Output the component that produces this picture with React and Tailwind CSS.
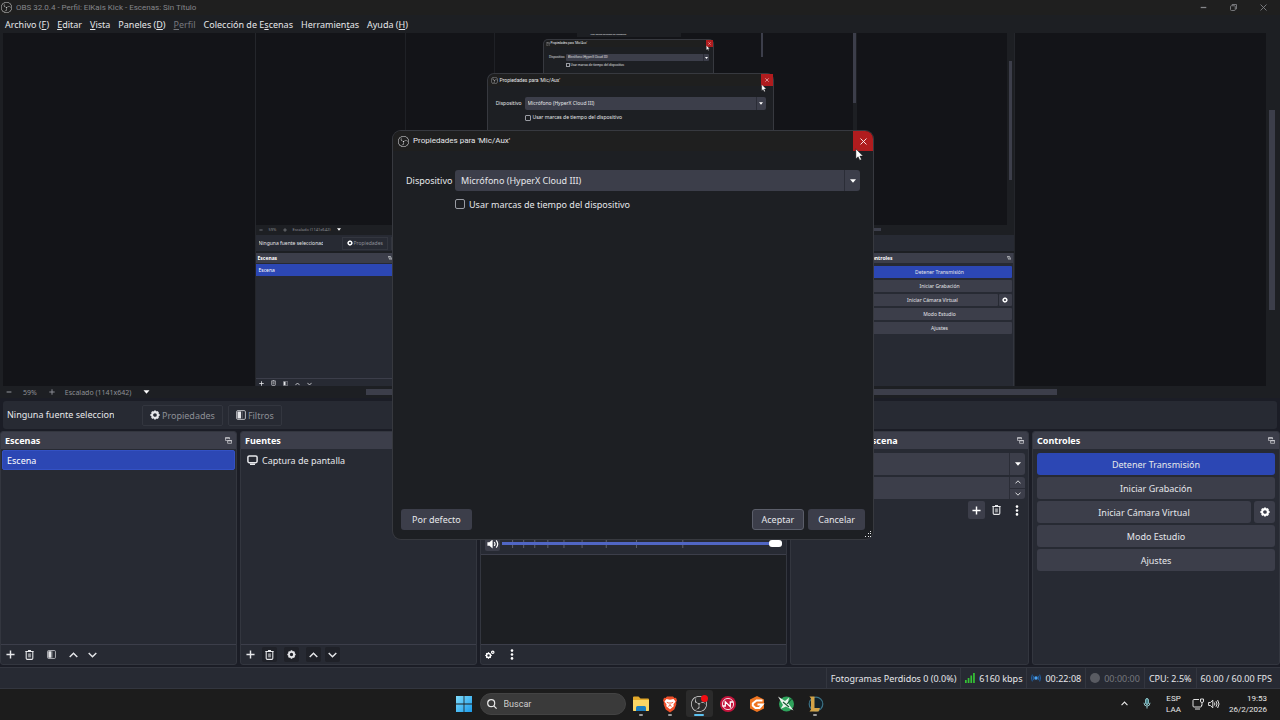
import React from "react";
import clsx from "clsx";
import { SiObsstudio } from "react-icons/si";

/* ---------- icons ---------- */

const Plus = ({ className = "size-[9px]" }) => (
  <svg viewBox="0 0 10 10" className={className} stroke="currentColor" strokeWidth="1.6" aria-hidden="true">
    <path d="M5 .5v9M.5 5h9" />
  </svg>
);

const Minus = ({ className = "size-[7px]" }) => (
  <svg viewBox="0 0 10 10" className={className} stroke="currentColor" strokeWidth="1.8" aria-hidden="true">
    <path d="M1 5h8" />
  </svg>
);

const Trash = ({ className = "h-[10px] w-[9px]" }) => (
  <svg viewBox="0 0 9 10" className={className} fill="none" stroke="currentColor" aria-hidden="true">
    <path d="M.3 1.5h8.4M3 .6h3" strokeWidth="1.1" />
    <path d="M1.2 2v6.2q0 1.2 1.1 1.2h4.4q1.1 0 1.1-1.2V2" strokeWidth="1.1" />
    <path d="M3.4 3.4v4M4.5 3.4v4M5.6 3.4v4" strokeWidth=".8" opacity=".75" />
  </svg>
);

const Gear = ({ className = "size-[10px]" }) => (
  <svg viewBox="0 0 20 20" className={className} fill="none" stroke="currentColor" aria-hidden="true">
    <circle cx="10" cy="10" r="5.8" strokeWidth="4.2" />
    <path d="M10 .8v3M10 16.2v3M.8 10h3M16.2 10h3M3.5 3.5l2 2M14.5 14.5l2 2M16.5 3.5l-2 2M5.5 14.5l-2 2" strokeWidth="3.6" />
  </svg>
);

const Gears = () => (
  <svg viewBox="0 0 20 18" className="h-[9px] w-[10px]" fill="none" stroke="currentColor" aria-hidden="true">
    <circle cx="7" cy="11" r="4" strokeWidth="3" />
    <path d="M7 4.5v2M7 15.5v2M.5 11h2M11.5 11h2M2.5 6.5l1.5 1.5M11.5 15.5l-1.500-1.500M2.500 15.500l1.500-1.500" strokeWidth="2.4" />
    <circle cx="15.5" cy="4.5" r="2.4" strokeWidth="2.4" />
  </svg>
);

const Filter = ({ className = "size-[9px]" }) => (
  <svg viewBox="0 0 10 10" className={className} aria-hidden="true">
    <rect x=".6" y=".6" width="8.8" height="8.8" rx="1.2" fill="none" stroke="currentColor" strokeWidth="1" opacity=".75" />
    <path d="M1.5 1.5h3.500v7H1.500z" fill="currentColor" />
    <path d="M6.2 1.5v7" stroke="currentColor" strokeWidth=".8" opacity=".4" />
  </svg>
);

const Chevron = ({ down, className = "h-[6px] w-[9px]" }) => (
  <svg viewBox="0 0 9 6" className={className} fill="none" stroke="currentColor" strokeWidth="1.4" aria-hidden="true">
    <path d={down ? "M.7 .9l3.8 3.9 3.8-3.9" : "M.7 5.1l3.8-3.9 3.8 3.9"} />
  </svg>
);

const Caret = ({ className = "h-[4px] w-[6px]" }) => (
  <svg viewBox="0 0 6 4" className={className} fill="currentColor" aria-hidden="true">
    <path d="M0 .2h6L3 3.8z" />
  </svg>
);

const Dots = () => (
  <svg viewBox="0 0 4 11" className="h-[11px] w-[4px]" fill="currentColor" aria-hidden="true">
    <circle cx="2" cy="1.6" r="1.3" />
    <circle cx="2" cy="5.5" r="1.3" />
    <circle cx="2" cy="9.4" r="1.3" />
  </svg>
);

const PopOut = ({ className = "size-[7px]" }) => (
  <svg viewBox="0 0 8 8" className={className} fill="none" stroke="currentColor" aria-hidden="true">
    <path d="M2.6 3.9H.5V.9h4.700v1.700" strokeWidth=".8" />
    <path d="M.3 1.2h5" strokeWidth="1.2" />
    <path d="M3 4h4.500v3.200H3z" strokeWidth=".8" />
    <path d="M2.7 4.2h5" strokeWidth="1.2" />
  </svg>
);

const Monitor = () => (
  <svg viewBox="0 0 11 10" className="h-[10px] w-[11px]" fill="none" stroke="currentColor" aria-hidden="true">
    <rect x=".9" y=".9" width="9.2" height="6.8" rx="1.4" strokeWidth="1.5" />
    <path d="M3 9.2h5" strokeWidth="1.4" />
  </svg>
);

const Cross = ({ className = "size-[7px]" }) => (
  <svg viewBox="0 0 8 8" className={className} stroke="currentColor" strokeWidth="1" aria-hidden="true">
    <path d="M.6 .6l6.8 6.8M7.4 .6L.6 7.4" />
  </svg>
);

const Speaker = () => (
  <svg viewBox="0 0 12 10" className="h-[10px] w-[12px]" fill="none" stroke="currentColor" aria-hidden="true">
    <path d="M.4 3.2h2L5.6.5v9L2.4 6.8h-2z" fill="currentColor" stroke="none" />
    <path d="M7.2 3q1.600 2 0 4M9.2 1.300q3 3.700 0 7.400" strokeWidth="1.2" />
  </svg>
);

const Cursor = ({ className }) => (
  <svg viewBox="0 0 10 14" className={className} aria-hidden="true">
    <path d="M1 .8v11l2.500-2.300 1.800 3.900 1.900-.9-1.800-3.700h3.500z" fill="#fff" stroke="#111" strokeWidth=".5" />
  </svg>
);

/* ---------- dialog ---------- */

const dialogSizes = {
  lg: {
    box: "w-[480px] h-[408px] rounded-lg",
    bar: "h-[20px] pl-[5px] gap-[4px] text-[8px]",
    logo: "size-[11px]",
    close: "w-[20px] h-[20px] rounded-tr-lg",
    cross: "size-[7px]",
    form: "pt-[19px] pl-[13px] pr-[13px] text-[9px]",
    grid: "grid-cols-[44px_1fr] gap-x-[5px] gap-y-[7px]",
    select: "h-[21px] pl-[6px] rounded-[3px]",
    arrow: "w-[16px]",
    caret: "h-[4px] w-[6px]",
    check: "size-[10px] rounded-[2px]",
    checkRow: "gap-[4px] h-[12px]",
  },
  md: {
    box: "w-[285px] h-[242px] rounded-md",
    bar: "h-[12px] pl-[3px] gap-[2px] text-[5px]",
    logo: "size-[7px]",
    close: "w-[12px] h-[12px]",
    cross: "size-[4px]",
    form: "pt-[11px] pl-[8px] pr-[7px] text-[5px]",
    grid: "grid-cols-[26px_1fr] gap-x-[3px] gap-y-[4px]",
    select: "h-[13px] pl-[3px] rounded-[2px]",
    arrow: "w-[10px]",
    caret: "h-[3px] w-[4px]",
    check: "size-[6px] rounded-[1px]",
    checkRow: "gap-[2px] h-[7px]",
  },
  sm: {
    box: "w-[169px] h-[144px] rounded",
    bar: "h-[7px] pl-[2px] gap-[1px] text-[3px]",
    logo: "size-[4px]",
    close: "w-[7px] h-[7px]",
    cross: "size-[3px]",
    form: "pt-[7px] pl-[5px] pr-[4px] text-[3px]",
    grid: "grid-cols-[16px_1fr] gap-x-[1px] gap-y-[2px]",
    select: "h-[7px] pl-[2px] rounded-[1px]",
    arrow: "w-[6px]",
    caret: "h-[2px] w-[3px]",
    check: "size-[4px]",
    checkRow: "gap-[1px] h-[4px]",
  },
};

function PropertiesDialog({ size, id, className, children }) {
  const s = dialogSizes[size];
  return (
    <section
      role="dialog"
      aria-label="Propiedades para 'Mic/Aux'"
      className={clsx("absolute flex flex-col bg-[#1d1f23] ring-1 ring-[#37393f] text-[#e6e7ea]", s.box, className)}
    >
      <header className={clsx("flex items-center leading-none rounded-t-lg bg-[#1f1f1f] font-[Roboto,'Noto_Sans',sans-serif]", s.bar)}>
        <SiObsstudio className={s.logo} />
        <h2 className="flex-1 whitespace-nowrap">Propiedades para 'Mic/Aux'</h2>
        <button aria-label="Cerrar" className={clsx("flex items-center justify-center bg-[#b01c1e] text-white", s.close)}>
          <Cross className={s.cross} />
        </button>
      </header>
      <div className={clsx("flex-1 leading-none", s.form)}>
        <div className={clsx("grid items-center", s.grid)}>
          <label htmlFor={id + "-device"} className="text-right whitespace-nowrap">Dispositivo</label>
          <div className="relative flex">
            <select id={id + "-device"} className={clsx("w-full appearance-none bg-[#3c3e4a] leading-normal outline-none", s.select)}>
              <option>Micrófono (HyperX Cloud III)</option>
            </select>
            <span className={clsx("pointer-events-none absolute inset-y-0 right-0 flex items-center justify-center border-l border-[#2b2d37] text-white", s.arrow)}>
              <Caret className={s.caret} />
            </span>
          </div>
          <label className={clsx("col-start-2 flex items-center whitespace-nowrap", s.checkRow)}>
            <input type="checkbox" className={clsx("shrink-0 appearance-none border border-[#9a9ca3]", s.check)} />
            Usar marcas de tiempo del dispositivo
          </label>
        </div>
      </div>
      {children}
    </section>
  );
}

/* ---------- shared dock pieces ---------- */

function Dock({ title, mini, children, className }) {
  return (
    <section className={clsx("flex min-w-0 flex-col overflow-hidden bg-[#272a33]", mini ? "border-r border-[#33363f]" : "rounded-[3px] border border-[#33363f]", className)}>
      <header
        className={clsx(
          "flex shrink-0 items-center justify-between bg-[#3c3e4a] font-bold leading-none text-white",
          mini ? "h-[10px] px-[2px] text-[5px]" : "h-[17px] px-[4px] text-[9px]"
        )}
      >
        <h3>{title}</h3>
        <button aria-label={"Desacoplar " + title} className="text-[#d5d6da]">
          <PopOut className={mini ? "size-[4px]" : "size-[7px]"} />
        </button>
      </header>
      {children}
    </section>
  );
}

function Controls({ mini }) {
  const btn = clsx(
    "flex items-center justify-center bg-[#3c3e4a] leading-none",
    mini ? "h-[12px] rounded-[1px]" : "h-[22px] rounded-[3px]"
  );
  return (
    <div className={clsx("flex flex-col text-[#e6e7ea]", mini ? "gap-[2px] px-[1px] pt-[3px] text-[5px]" : "gap-[2px] px-[4px] pt-[4px] text-[9px]")}>
      <button className={clsx(btn, "bg-[#2c47b4]!")}>Detener Transmisión</button>
      <button className={btn}>Iniciar Grabación</button>
      <div className={clsx("flex", mini ? "gap-[1px]" : "gap-[3px]")}>
        <button className={clsx(btn, "flex-1")}>Iniciar Cámara Virtual</button>
        <button aria-label="Configurar cámara virtual" className={clsx(btn, "text-white", mini ? "w-[13px]" : "w-[21px]")}>
          <Gear className={mini ? "size-[6px]" : "size-[10px]"} />
        </button>
      </div>
      <button className={btn}>Modo Estudio</button>
      <button className={btn}>Ajustes</button>
    </div>
  );
}

/* ---------- preview: the captured desktop, seen inside itself ---------- */

function CapturedDesktop() {
  return (
    <div className="relative flex h-full w-[760px] shrink-0 flex-col overflow-hidden border-x border-[#24262b] bg-[#1d1f23]">
      <div className="relative flex h-[192px] shrink-0 bg-[#131418]">
        <div className="flex flex-1 justify-center overflow-hidden">
          <div className="flex w-[452px] border-l border-[#1f2126] pl-[88px]">
            <div className="flex w-[269px] justify-end border-l border-[#1f2126]">
              <div className="h-[24px] w-[2px] bg-[#3c3e4a]" />
            </div>
            <div className="flex flex-1 justify-end">
              <div className="w-[4px] bg-[#1d1f23]">
                <div className="h-[70px] w-[3px] bg-[#3c3e4a]" />
              </div>
            </div>
          </div>
        </div>
        <div className="w-[7px] bg-[#1d1f23] px-[2px] pt-[28px]">
          <div className="h-[119px] bg-[#3c3e4a]" />
        </div>
        <div className="absolute top-0 left-[321px] w-[104px] bg-[#1d1f23] pl-[14px] text-[2px] leading-[4px] whitespace-nowrap text-[#e6e7ea]">
          Usar marcas de tiempo del dispositivo
        </div>
        <PropertiesDialog size="sm" id="echo-two" className="top-[7px] left-[288px]">
          <Cursor className="absolute top-[5px] right-[3px] h-[6px] w-[4px]" />
        </PropertiesDialog>
        <PropertiesDialog size="md" id="echo-one" className="top-[41px] left-[232px]">
          <Cursor className="absolute top-[10px] right-[6px] h-[8px] w-[6px]" />
        </PropertiesDialog>
      </div>
      <div className="flex h-[9px] shrink-0 items-center text-[4px] leading-none text-[#8d8f96]">
        <Minus className="ml-[3px] size-[4px]" />
        <span className="ml-[6px]">59%</span>
        <Plus className="ml-[7px] size-[4px]" />
        <span className="ml-[5px]">Escalado (1141x642)</span>
        <Caret className="ml-[7px] h-[3px] w-[4px] text-white" />
        <div className="ml-[120px] h-[3px] w-[420px] bg-[#3c3e4a]" />
      </div>
      <div className="mt-[1px] flex h-[16px] shrink-0 items-center bg-[#272a33] text-[5px] leading-none text-[#e6e7ea]">
        <span className="ml-[3px] w-[64px] overflow-hidden leading-[8px] whitespace-nowrap">Ninguna fuente seleccionada</span>
        <button className="ml-[19px] flex h-[13px] items-center gap-px border border-[#33363f] px-[4px] text-[#8d8f96]">
          <Gear className="size-[6px] text-white" />
          Propiedades
        </button>
        <button className="ml-[3px] h-[13px] border border-[#33363f] px-[4px] text-[#8d8f96]">Filtros</button>
      </div>
      <div className="mt-[2px] flex flex-1 gap-[2px]">
        <Dock mini title="Escenas" className="w-[139px]">
          <div className="mt-px flex h-[12px] items-center bg-[#2c47b4] pl-[3px] text-[5px] leading-none text-white">Escena</div>
          <div className="flex-1" />
          <div className="flex h-[8px] items-end gap-[7px] border-t border-[#3c3e4a] pl-[3px] text-[#e6e7ea]">
            <Plus className="size-[5px]" />
            <Trash className="h-[6px] w-[5px]" />
            <Filter className="size-[5px]" />
            <Chevron className="h-[4px] w-[5px]" />
            <Chevron down className="h-[4px] w-[5px]" />
          </div>
        </Dock>
        <div className="flex-1 bg-[#272a33]" />
        <Dock mini title="Controles" className="w-[147px]">
          <Controls mini />
        </Dock>
      </div>
    </div>
  );
}

/* ---------- main window ---------- */

const menu = [
  ["Archivo (", "F", ")"],
  ["", "E", "ditar"],
  ["", "V", "ista"],
  ["Paneles (", "D", ")"],
  ["", "P", "erfil", true],
  ["Colección de E", "s", "cenas"],
  ["Herramien", "t", "as"],
  ["Ayuda (", "H", ")"],
];

function TitleBar() {
  return (
    <header className="flex h-[15px] items-center bg-[#1f1f1f] pl-[1px] text-[#85868a]">
      <SiObsstudio className="size-[11px] text-[#d0d0d0]" />
      <h1 className="ml-[4px] flex-1 font-[Roboto,'Noto_Sans',sans-serif] text-[8px] leading-none">
        OBS 32.0.4 - Perfil: ElKais Kick - Escenas: Sin Título
      </h1>
      <div className="flex items-center gap-[23px] pr-[13px]">
        <button aria-label="Minimizar"><Minus /></button>
        <button aria-label="Restaurar">
          <svg viewBox="0 0 8 8" className="size-[7px]" fill="none" stroke="currentColor" aria-hidden="true">
            <rect x=".6" y="2" width="5.4" height="5.4" rx="1" />
            <path d="M2.4 1.8V.6h5v5H6.2" />
          </svg>
        </button>
        <button aria-label="Cerrar"><Cross /></button>
      </div>
    </header>
  );
}

function MenuBar() {
  return (
    <nav className="flex h-[18px] items-center gap-[8px] bg-[#1d1f23] px-[5px] text-[9px] leading-none text-[#e6e7ea]">
      {menu.map(([a, k, b, off]) => (
        <button key={a + k + b} className={clsx(off && "text-[#75777d]")}>
          {a}<u>{k}</u>{b}
        </button>
      ))}
    </nav>
  );
}

function ToolButton({ label, dim, apart, children }) {
  return (
    <button
      aria-label={label}
      className={clsx("flex h-[15px] w-[15px] items-center justify-center rounded-[2px]", dim && "bg-[#1f2128]", apart && "ml-[3px]")}
    >
      {children}
    </button>
  );
}

const ticks = [12, 23, 34, 47, 63, 81, 105, 135, 181];

function Mixer() {
  return (
    <Dock title="Mezclador de audio">
      <div className="flex h-[106px] shrink-0 items-end border-b border-[#3c3e4a] px-[4px] pb-[3px]">
        <button aria-label="Silenciar" className="flex h-[15px] w-[15px] items-center justify-center rounded-[2px] bg-[#3c3e4a] text-white">
          <Speaker />
        </button>
        <div className="relative flex h-[15px] flex-1 items-center">
          <svg viewBox="0 0 280 8" preserveAspectRatio="none" className="absolute inset-x-0 top-[4px] h-[8px] w-full" stroke="#5d606e" aria-hidden="true">
            {ticks.map((x) => <path key={x} d={`M${x}.5 0v8`} />)}
          </svg>
          <input
            type="range"
            aria-label="Volumen"
            defaultValue="100"
            className="relative ml-[2px] h-[3px] w-full appearance-none bg-[#5066c4] [&::-webkit-slider-thumb]:h-[7px] [&::-webkit-slider-thumb]:w-[13px] [&::-webkit-slider-thumb]:appearance-none [&::-webkit-slider-thumb]:rounded-[3px] [&::-webkit-slider-thumb]:bg-white"
          />
        </div>
      </div>
      <div className="flex-1 bg-[#1d1f23]" />
      <footer className="flex h-[20px] items-center gap-[7px] border-t border-[#3c3e4a] px-px text-white">
        <ToolButton label="Ajustes de audio"><Gears /></ToolButton>
        <ToolButton label="Menú del mezclador"><Dots /></ToolButton>
      </footer>
    </Dock>
  );
}

function Docks() {
  return (
    <main className="grid h-[234px] grid-cols-[237fr_237fr_307fr_239fr_248fr] gap-[3px] text-[9px] leading-none text-[#e6e7ea]">
      <Dock title="Escenas">
        <ul className="flex-1 px-px pt-px">
          <li className="flex h-[20px] items-center rounded-[2px] border border-[#3351c4] bg-[#2c47b4] pl-[4px] text-white">Escena</li>
        </ul>
        <footer className="flex h-[20px] items-center gap-[4px] border-t border-[#3c3e4a] px-[2px]">
          <ToolButton label="Agregar escena"><Plus /></ToolButton>
          <ToolButton label="Eliminar escena"><Trash /></ToolButton>
          <ToolButton apart label="Filtros de escena"><Filter /></ToolButton>
          <ToolButton apart label="Subir escena"><Chevron /></ToolButton>
          <ToolButton label="Bajar escena"><Chevron down /></ToolButton>
        </footer>
      </Dock>
      <Dock title="Fuentes">
        <ul className="flex-1 px-[6px] pt-px">
          <li className="flex h-[20px] items-center gap-[4px]"><Monitor />Captura de pantalla</li>
        </ul>
        <footer className="flex h-[20px] items-center gap-[4px] border-t border-[#3c3e4a] px-[2px]">
          <ToolButton label="Agregar fuente"><Plus /></ToolButton>
          <ToolButton dim label="Eliminar fuente"><Trash /></ToolButton>
          <ToolButton dim apart label="Propiedades de fuente"><Gear className="size-[9px]" /></ToolButton>
          <ToolButton dim apart label="Subir fuente"><Chevron /></ToolButton>
          <ToolButton dim label="Bajar fuente"><Chevron down /></ToolButton>
        </footer>
      </Dock>
      <Mixer />
      <Dock title="Transiciones de escena">
        <div className="flex flex-col gap-[2px] px-[3px] pt-[4px]">
          <div className="relative flex">
            <select aria-label="Transición" className="h-[22px] w-full appearance-none rounded-[3px] bg-[#3c3e4a] pl-[6px]">
              <option>Corte</option>
            </select>
            <span className="pointer-events-none absolute inset-y-0 right-0 flex w-[16px] items-center justify-center border-l border-[#2b2d37] text-white"><Caret /></span>
          </div>
          <div className="flex h-[22px] rounded-[3px] bg-[#3c3e4a]">
            <input aria-label="Duración" defaultValue="300 ms" className="min-w-0 flex-1 bg-transparent pl-[6px]" />
            <div className="flex w-[16px] flex-col border-l border-[#2b2d37]">
              <button aria-label="Aumentar duración" className="flex flex-1 items-center justify-center border-b border-[#2b2d37]"><Chevron className="h-[4px] w-[6px]" /></button>
              <button aria-label="Reducir duración" className="flex flex-1 items-center justify-center"><Chevron down className="h-[4px] w-[6px]" /></button>
            </div>
          </div>
          <div className="flex items-center justify-end gap-[3px]">
            <button aria-label="Agregar transición" className="flex h-[18px] w-[17px] items-center justify-center rounded-[2px] bg-[#3c3e4a] text-white"><Plus /></button>
            <button aria-label="Eliminar transición" className="flex h-[18px] w-[17px] items-center justify-center"><Trash /></button>
            <button aria-label="Más opciones" className="flex h-[18px] w-[17px] items-center justify-center text-white"><Dots /></button>
          </div>
        </div>
      </Dock>
      <Dock title="Controles">
        <Controls />
      </Dock>
    </main>
  );
}

function StatusBar() {
  const cell = "flex h-full items-center border-l border-[#33363f] px-[4px]";
  return (
    <footer className="mt-[2px] flex h-[22px] items-center justify-end border-y border-[#33363f] bg-[#272a33] pr-[4px] text-[9px] leading-none text-[#e6e7ea]">
      <span className={cell}>Fotogramas Perdidos 0 (0.0%)</span>
      <span className={clsx(cell, "gap-[4px]")}>
        <svg viewBox="0 0 10 10" className="size-[10px]" fill="#35c435" aria-hidden="true">
          <path d="M0 7h1.700v3H0zM2.700 5h1.700v5H2.700zM5.400 2.500h1.700V10H5.400zM8.100 0h1.700v10H8.100z" />
        </svg>
        6160 kbps
      </span>
      <span className={clsx(cell, "gap-[4px]")}>
        <svg viewBox="0 0 10 8" className="h-[8px] w-[10px]" fill="none" stroke="#2066ae" aria-hidden="true">
          <circle cx="5" cy="4" r="1.700" fill="#4aa3f5" stroke="none" />
          <path d="M2.900 1.800q-1.500 2.200 0 4.400M7.100 1.800q1.500 2.200 0 4.400M1.300.6q-1.500 3.400 0 6.800M8.700.6q1.500 3.400 0 6.800" />
        </svg>
        00:22:08
      </span>
      <span className={clsx(cell, "gap-[4px] text-[#75777d]")}>
        <span className="size-[10px] rounded-full bg-[#595b62]" />
        00:00:00
      </span>
      <span className={cell}>CPU: 2.5%</span>
      <span className={cell}>60.00 / 60.00 FPS</span>
    </footer>
  );
}

/* ---------- windows taskbar ---------- */

function TaskApp({ label, running, active, children }) {
  return (
    <button aria-label={label} className={clsx("flex h-[27px] w-[27px] flex-col items-center justify-center rounded-[3px] pt-[4px]", active && "bg-[#2b2b2b]")}>
      <svg viewBox="0 0 18 18" className="size-[18px]" aria-hidden="true">{children}</svg>
      <span className={clsx("mt-px h-[2px] rounded-full", active ? "w-[10px] bg-[#5cc0ee]" : "w-[4px]", running && "bg-[#9b9b9b]")} />
    </button>
  );
}

function Taskbar() {
  return (
    <footer className="grid h-[31px] grid-cols-[1fr_auto_1fr] items-center bg-[#1c1c1c] pb-[2px] font-[Roboto,'Noto_Sans',sans-serif] text-[#e8e8e8]">
      <div />
      <div className="flex items-center gap-[2px] pl-[4px]">
        <button aria-label="Inicio" className="mr-[6px]">
          <svg viewBox="0 0 16 16" className="size-[16px]" aria-hidden="true">
            <defs>
              <linearGradient id="win" x1="0" y1="0" x2="1" y2="1">
                <stop offset="0" stopColor="#7fdcfb" />
                <stop offset="1" stopColor="#1b9bea" />
              </linearGradient>
            </defs>
            <path d="M0 0h7.600v7.600H0zM8.400 0H16v7.600H8.400zM0 8.400h7.600V16H0zM8.400 8.400H16V16H8.400z" fill="url(#win)" />
          </svg>
        </button>
        <label className="flex h-[22px] w-[146px] items-center gap-[7px] rounded-full border border-[#434343] bg-[#3a3a3a] px-[6px]">
          <svg viewBox="0 0 10 10" className="size-[10px] shrink-0" fill="none" stroke="#e8e8e8" strokeWidth="1.2" aria-hidden="true">
            <circle cx="4.2" cy="4.2" r="3.5" />
            <path d="M6.8 6.8l2.8 2.8" />
          </svg>
          <input aria-label="Buscar" placeholder="Buscar" className="w-full bg-transparent text-[9px] leading-none outline-none placeholder:text-[#cfcfcf]" />
        </label>
        <TaskApp label="Explorador de archivos" running>
          <path d="M1 2.500q0-1 1-1h4.500l2 2H16q1 0 1 1V15q0 1-1 1H2q-1 0-1-1z" fill="#e3a92a" />
          <path d="M1 5h16v10q0 1-1 1H2q-1 0-1-1z" fill="#fbd765" />
          <path d="M4 16v-3.500q0-1.500 1.500-1.500h7q1.500 0 1.500 1.500V16z" fill="#1c7fc0" />
        </TaskApp>
        <TaskApp label="Brave" running>
          <path d="M6 1.500h6l1.500 1.500 1.500-.2 1 2.700-.8 1.800.1 2.200-2 5L9 17.500 4.700 14.500l-2-5 .1-2.200L2 5.500l1-2.700 1.500.2z" fill="#f0502a" />
          <path d="M5.500 4l3.500.7 3.500-.7 2 2.500-2 2.700.2 2L9 14.300l-3.700-3.100.2-2-2-2.700z" fill="#fff" />
          <path d="M5.800 7.300l2.200.9M12.200 7.300l-2.200.9M9 7v3.500M7.300 11.300L9 10.500l1.700.8" fill="none" stroke="#f0502a" strokeWidth=".9" />
        </TaskApp>
        <TaskApp label="OBS Studio" active>
          <svg x="1" y="1" width="16" height="16" viewBox="0 0 24 24">
            <SiObsstudio size={24} color="#dadada" />
          </svg>
          <circle cx="14.500" cy="3.500" r="3.500" fill="#f40d12" />
        </TaskApp>
        <TaskApp label="Navegador de radio">
          <circle cx="9" cy="9" r="8" fill="#c4143c" />
          <circle cx="9" cy="9" r="5.600" fill="none" stroke="#f3d3da" strokeWidth="1" />
          <path d="M3.500 11h2.800V6.800l5 4.800V7h3" fill="none" stroke="#fff" strokeWidth="1.300" />
        </TaskApp>
        <TaskApp label="Gestor de juegos">
          <path d="M9 1l7 3.500v9L9 17l-7-3.500v-9z" fill="#ee7420" />
          <path d="M14.500 5.500H8.500L4.800 8.500v2l2.700 2.500h4l3-3.500H9.500" fill="none" stroke="#fff" strokeWidth="2" />
        </TaskApp>
        <TaskApp label="Optimizador">
          <circle cx="9.500" cy="9" r="7.500" fill="#2fa35c" />
          <path d="M1 1.500l7 4.500 4-3.500-1 5.500 5.500 7.500-7.500-4-5.500 2.500 2.500-4z" fill="#eaf3ec" />
          <path d="M10 9l5-5.500M6 7l6 5" stroke="#15552e" strokeWidth="1.100" />
        </TaskApp>
        <TaskApp label="League of Legends" running>
          <circle cx="10" cy="9" r="6.800" fill="#10222c" stroke="#3c7286" strokeWidth="1.200" />
          <path d="M3.500 1.500h5V13H14l-1.500 3.500h-9l1.500-2V3.500z" fill="#d2a348" />
        </TaskApp>
      </div>
      <div className="flex items-center justify-end pr-[13px] text-[8px] leading-[11px]">
        <button aria-label="Mostrar iconos ocultos"><Chevron className="h-[5px] w-[7px]" /></button>
        <svg viewBox="0 0 8 12" className="ml-[15px] h-[11px] w-[8px]" fill="none" stroke="#9fd6dc" aria-hidden="true">
          <rect x="2.500" y=".6" width="3" height="6.400" rx="1.500" fill="#3f7c84" />
          <path d="M.7 5.200q0 3.600 3.300 3.600t3.300-3.600M4 8.800v2.700" />
        </svg>
        <span className="ml-[15px] text-center">ESP<br />LAA</span>
        <svg viewBox="0 0 12 12" className="ml-[11px] size-[12px]" fill="none" stroke="#e0e0e0" aria-hidden="true">
          <path d="M7 1.500H2q-1 0-1 1v5.500q0 1 1 1h6.500q1 0 1-1V7M3 11h5M8.500 1h3v2.800q-1.500 1.500-3 0zM10 4.500v3" />
        </svg>
        <svg viewBox="0 0 12 10" className="ml-[4px] h-[10px] w-[12px]" fill="none" stroke="#e0e0e0" aria-hidden="true">
          <path d="M.6 3.500h1.800L4.800 1.200v7.600L2.400 6.500H.6zM6.400 3.500q1 1.500 0 3M8 2.200q2 2.800 0 5.600M9.600 1q2.900 4 0 8" />
        </svg>
        <time className="ml-[9px] text-right">19:53<br />26/2/2026</time>
      </div>
    </footer>
  );
}

export default function App() {
  return (
    <div className="relative flex min-h-screen flex-col overflow-hidden bg-[#1b1d26] font-['Noto_Sans','Open_Sans',sans-serif]">
      <TitleBar />
      <MenuBar />
      <div className="relative flex min-h-[353px] flex-1 bg-[#1d1f23] pl-[3px]">
        <div className="relative flex-1 overflow-hidden bg-[#131418]">
          <div className="absolute inset-0 flex justify-center"><CapturedDesktop /></div>
        </div>
        <div className="w-[14px] px-[3px] pt-[77px]">
          <div className="h-[200px] w-[6px] bg-[#3c3e4a]" />
        </div>
      </div>
      <div className="flex h-[12px] items-center bg-[#1d1f23] pr-[13px] text-[7px] leading-none text-[#8d8f96]">
        <button aria-label="Alejar" className="ml-[6px]"><Minus className="size-[6px]" /></button>
        <span className="ml-[11px]">59%</span>
        <button aria-label="Acercar" className="ml-[12px]"><Plus className="size-[6px]" /></button>
        <button className="mr-[6px] ml-[10px] flex items-center gap-[12px]">
          Escalado (1141x642)
          <Caret className="h-[4px] w-[7px] text-white" />
        </button>
        <div className="grid flex-1 grid-cols-[210fr_691fr_210fr]">
          <div className="col-start-2 h-[6px] bg-[#3c3e4a]" />
        </div>
      </div>
      <div className="mx-[3px] mt-[3px] flex h-[28px] items-center rounded-[3px] bg-[#272a33] text-[9px] leading-none text-[#e6e7ea]">
        <span className="ml-[4px] w-[107px] overflow-hidden leading-[16px] whitespace-nowrap">Ninguna fuente seleccionada</span>
        <button className="ml-[28px] flex h-[21px] items-center gap-[2px] rounded-[2px] border border-[#33363f] px-[7px] text-[#8d8f96]">
          <Gear className="size-[10px] text-[#e6e7ea]" />
          Propiedades
        </button>
        <button className="ml-[5px] flex h-[21px] items-center gap-[2px] rounded-[2px] border border-[#33363f] px-[7px] text-[#8d8f96]">
          <Filter className="size-[10px] text-[#e6e7ea]" />
          Filtros
        </button>
      </div>
      <div className="mt-[2px]"><Docks /></div>
      <StatusBar />
      <Taskbar />

      <PropertiesDialog size="lg" id="properties" className="top-[131px] left-[393px]">
        <div className="flex gap-[4px] px-[8px] pb-[9px] text-[9px] leading-none">
          <button className="h-[21px] rounded-[3px] bg-[#3c3e4a] px-[11px]">Por defecto</button>
          <span className="flex-1" />
          <button className="h-[21px] rounded-[3px] border border-[#5b5e6a] bg-[#3c3e4a] px-[9px]">Aceptar</button>
          <button className="h-[21px] rounded-[3px] bg-[#3c3e4a] px-[10px]">Cancelar</button>
        </div>
        <svg viewBox="0 0 6 6" className="absolute right-[2px] bottom-[2px] size-[6px]" fill="#e6e7ea" shapeRendering="crispEdges" aria-hidden="true">
          <path d="M5 0h1v1H5zM2.500 2h1v1h-1zM5 2h1v1H5zM0 5h1v1H0zM2.500 5h1v1h-1zM5 5h1v1H5z" />
        </svg>
        <Cursor className="absolute top-[17px] right-[9px] h-[13px] w-[9px]" />
      </PropertiesDialog>
    </div>
  );
}
